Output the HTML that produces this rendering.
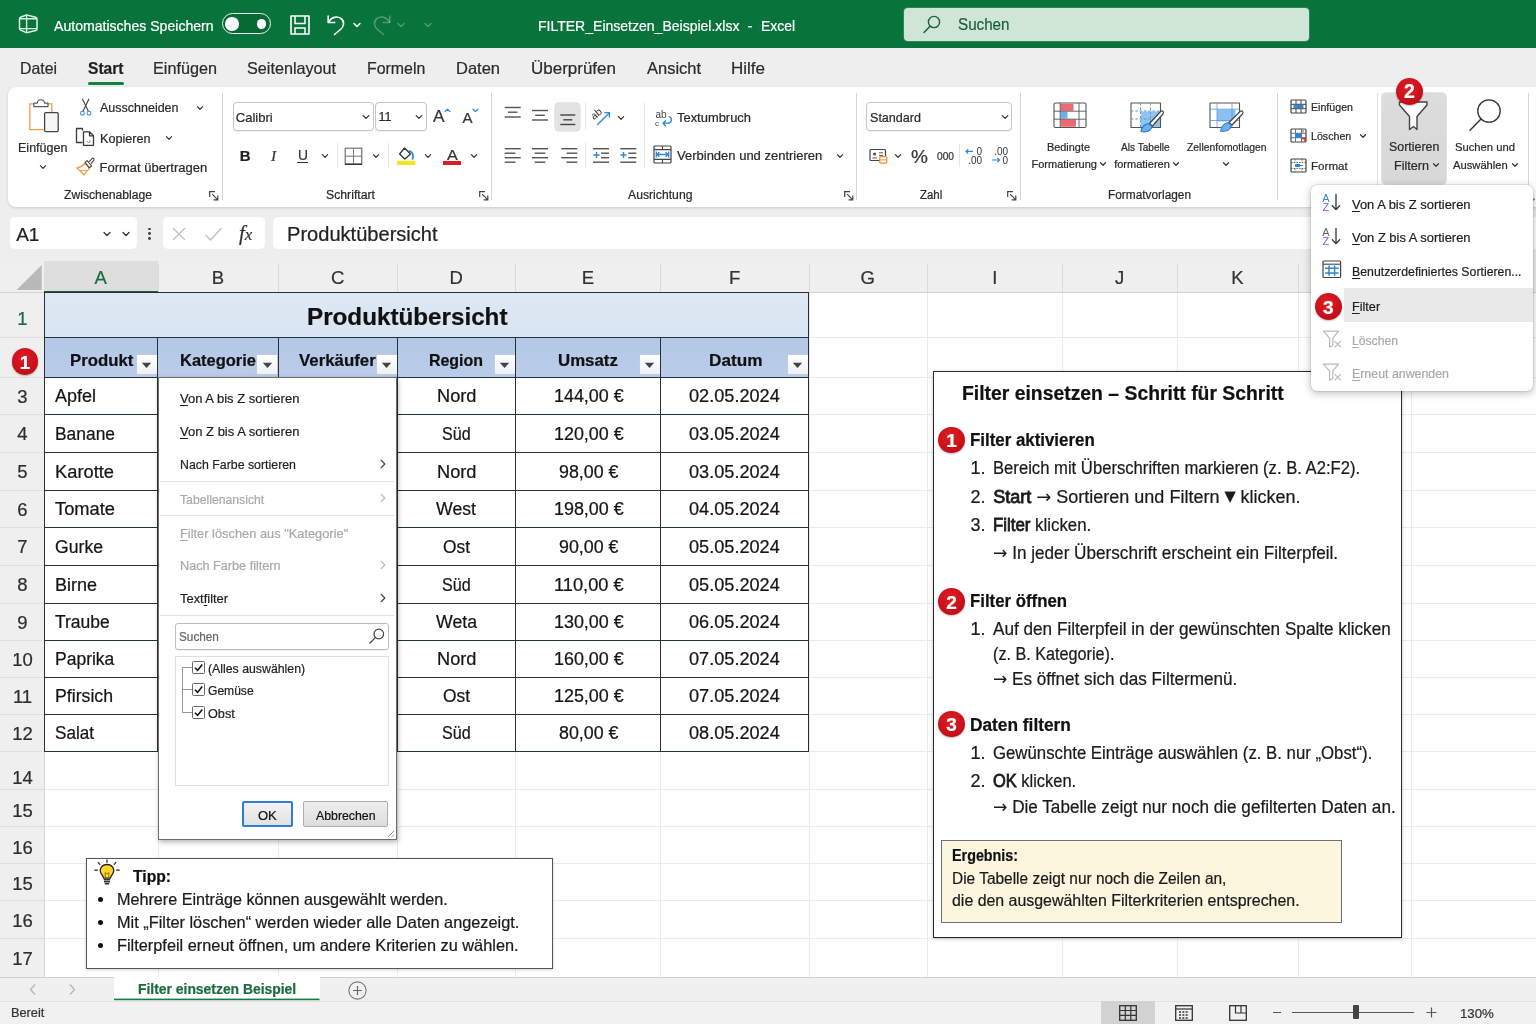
<!DOCTYPE html>
<html lang="de"><head><meta charset="utf-8"><title>FILTER_Einsetzen_Beispiel.xlsx - Excel</title>
<style>
html,body{margin:0;padding:0}
body{width:1536px;height:1024px;position:relative;overflow:hidden;background:#fff;font-family:"Liberation Sans", sans-serif;color:#222;}
.t{position:absolute;white-space:nowrap;line-height:1;transform-origin:0 0;-webkit-text-stroke:.22px}
#root{position:absolute;left:0;top:0;width:1536px;height:1024px;will-change:transform}

</style></head><body><div id="root">
<div style="position:absolute;left:0px;top:0px;width:1536px;height:48px;background:#08733a"></div>
<div style="position:absolute;left:0px;top:48px;width:1536px;height:214px;background:#eeeeee"></div>
<svg style="position:absolute;left:18px;top:13px;" width="21" height="22" viewBox="0 0 21 22"><path d="M1.5 6 Q1.5 4.6 3 4 L7.8 2.2 Q8.8 1.9 9.8 2.2 L17.6 4.2 Q19 4.6 19 6 V16 Q19 17.2 17.8 17.5 L9.6 19.6 Q8.6 19.9 7.6 19.4 L2.6 17 Q1.5 16.5 1.5 15.4 Z" fill="none" stroke="#d9f5e5" stroke-width="1.5" stroke-linejoin="round"/><path d="M1.8 5.8 H18.8 M1.8 15.6 H18.8 M8.6 2.2 V19.6" fill="none" stroke="#d9f5e5" stroke-width="1.4"/></svg>
<div class="t" style="left:53.70px;top:17.80px;font-size:15px;color:#fff;transform:scaleX(0.9383);">Automatisches Speichern</div>
<div style="position:absolute;left:222px;top:13px;width:46.6px;height:18.6px;border:1.7px solid #e8f3ec;border-radius:12px;background:rgba(0,0,0,.07)"></div>
<div style="position:absolute;left:225.3px;top:17.3px;width:13.4px;height:13.4px;border-radius:50%;background:#fff"></div>
<div style="position:absolute;left:256.6px;top:19.3px;width:9.4px;height:9.4px;border-radius:50%;background:#fff"></div>
<svg style="position:absolute;left:289px;top:14px;" width="22" height="22" viewBox="0 0 22 22"><path d="M2 2 H20 V20 H2 Z" fill="none" stroke="#fff" stroke-width="1.6" stroke-linejoin="round"/><path d="M6 2 V9.5 H16 V2 M6 20 V14 H16 V20" fill="none" stroke="#fff" stroke-width="1.5"/></svg>
<svg style="position:absolute;left:326px;top:13px;" width="20" height="23" viewBox="0 0 20 23"><path d="M2.2 3 V9.5 H8.8" fill="none" stroke="#fff" stroke-width="1.6" stroke-linecap="round" stroke-linejoin="round"/><path d="M2.6 9.2 C5 4.2 11 2.6 15 5.5 C19 8.6 18 13.5 14.5 16.5 L8.5 21.5" fill="none" stroke="#fff" stroke-width="1.6" stroke-linecap="round"/></svg>
<svg style="position:absolute;left:352px;top:20.5px;" width="10" height="8" viewBox="0 0 10 8"><path d="M2 2.5 L5 5.5 L8 2.5" fill="none" stroke="#fff" stroke-width="1.5" stroke-linecap="round" stroke-linejoin="round"/></svg>
<svg style="position:absolute;left:372px;top:13px;" width="20" height="23" viewBox="0 0 20 23"><path d="M17.8 3 V9.5 H11.2" fill="none" stroke="rgba(255,255,255,.28)" stroke-width="1.6" stroke-linecap="round" stroke-linejoin="round"/><path d="M17.4 9.2 C15 4.2 9 2.6 5 5.5 C1 8.6 2 13.5 5.5 16.5 L11.5 21.5" fill="none" stroke="rgba(255,255,255,.28)" stroke-width="1.6" stroke-linecap="round"/></svg>
<svg style="position:absolute;left:396px;top:20.5px;" width="10" height="8" viewBox="0 0 10 8"><path d="M2 2.5 L5 5.5 L8 2.5" fill="none" stroke="rgba(255,255,255,.28)" stroke-width="1.5" stroke-linecap="round" stroke-linejoin="round"/></svg>
<svg style="position:absolute;left:422.5px;top:20.5px;" width="10" height="8" viewBox="0 0 10 8"><path d="M2 2.5 L5 5.5 L8 2.5" fill="none" stroke="rgba(255,255,255,.28)" stroke-width="1.5" stroke-linecap="round" stroke-linejoin="round"/></svg>
<div class="t" style="left:538.30px;top:17.80px;font-size:15px;color:#fff;transform:scaleX(0.9344);">FILTER_Einsetzen_Beispiel.xlsx</div>
<div class="t" style="left:747.50px;top:17.80px;font-size:15px;color:#fff;">-</div>
<div class="t" style="left:760.70px;top:17.80px;font-size:15px;color:#fff;transform:scaleX(0.9267);">Excel</div>
<div style="position:absolute;left:903.5px;top:7.5px;width:405.5px;height:33px;background:#cfe6d7;border-radius:4px;box-shadow:0 0 0 1px rgba(255,255,255,.15)"></div>
<svg style="position:absolute;left:922px;top:14px;" width="20" height="20" viewBox="0 0 20 20"><circle cx="12" cy="8" r="5.6" fill="none" stroke="#1d5e3a" stroke-width="1.4"/><path d="M8 12.2 L2 18.4" stroke="#1d5e3a" stroke-width="1.5" stroke-linecap="round"/></svg>
<div class="t" style="left:958.20px;top:16.96px;font-size:16px;color:#1d5e3a;transform:scaleX(0.9490);">Suchen</div>
<div class="t" style="left:19.70px;top:60.33px;font-size:16.5px;color:#2b2b2b;transform:scaleX(0.9603);">Datei</div>
<div class="t" style="left:87.80px;top:60.33px;font-size:16.5px;font-weight:700;color:#1f1f1f;transform:scaleX(0.9443);">Start</div>
<div class="t" style="left:153.00px;top:60.33px;font-size:16.5px;color:#2b2b2b;transform:scaleX(0.9825);">Einfügen</div>
<div class="t" style="left:247.20px;top:60.33px;font-size:16.5px;color:#2b2b2b;transform:scaleX(0.9810);">Seitenlayout</div>
<div class="t" style="left:367.20px;top:60.33px;font-size:16.5px;color:#2b2b2b;transform:scaleX(0.9634);">Formeln</div>
<div class="t" style="left:456.00px;top:60.33px;font-size:16.5px;color:#2b2b2b;">Daten</div>
<div class="t" style="left:531.00px;top:60.33px;font-size:16.5px;color:#2b2b2b;transform:scaleX(1.0295);">Überprüfen</div>
<div class="t" style="left:647.00px;top:60.33px;font-size:16.5px;color:#2b2b2b;">Ansicht</div>
<div class="t" style="left:731.00px;top:60.33px;font-size:16.5px;color:#2b2b2b;transform:scaleX(1.0298);">Hilfe</div>
<div style="position:absolute;left:87.5px;top:81.7px;width:36.2px;height:3.2px;background:#15803f;border-radius:2px"></div>
<div style="position:absolute;left:8px;top:87px;width:1540px;height:119.5px;background:#fff;border-radius:8px 0 0 8px;box-shadow:0 1px 3px rgba(0,0,0,.14)"></div>
<div style="position:absolute;left:222.0px;top:92.5px;width:1px;height:107.5px;background:#d6d6d6"></div>
<div style="position:absolute;left:490.8px;top:92.5px;width:1px;height:107.5px;background:#d6d6d6"></div>
<div style="position:absolute;left:856.2px;top:92.5px;width:1px;height:107.5px;background:#d6d6d6"></div>
<div style="position:absolute;left:1019.8px;top:92.5px;width:1px;height:107.5px;background:#d6d6d6"></div>
<div style="position:absolute;left:1276.9px;top:92.5px;width:1px;height:107.5px;background:#d6d6d6"></div>
<div style="position:absolute;left:1527.5px;top:92.5px;width:1px;height:107.5px;background:#d6d6d6"></div>
<div style="position:absolute;left:1376.9px;top:92.5px;width:1px;height:107.5px;background:#e2e2e2"></div>
<div style="position:absolute;left:337.0px;top:143px;width:1px;height:24.5px;background:#e6e6e6"></div>
<div style="position:absolute;left:387.8px;top:143px;width:1px;height:24.5px;background:#e6e6e6"></div>
<div style="position:absolute;left:585.0px;top:101.7px;width:1px;height:28.299999999999997px;background:#e6e6e6"></div>
<div style="position:absolute;left:585.0px;top:141.7px;width:1px;height:26.600000000000023px;background:#e6e6e6"></div>
<div style="position:absolute;left:644.0px;top:101.7px;width:1px;height:66.60000000000001px;background:#e6e6e6"></div>
<div style="position:absolute;left:959.0px;top:143.5px;width:1px;height:23.5px;background:#e6e6e6"></div>
<svg style="position:absolute;left:28px;top:98px;" width="32" height="36" viewBox="0 0 32 36">
<path d="M6.5 5.8 H1.8 V31.6 H15.5" fill="none" stroke="#f0a13c" stroke-width="1.3"/>
<path d="M19.5 5.8 H23.8 V14" fill="none" stroke="#f0a13c" stroke-width="1.3"/>
<path d="M5.8 8.6 V5.2 H9.2 C9.8 .6 16 .6 16.6 5.2 H20 V8.6 Z" fill="#fff" stroke="#5a5a5a" stroke-width="1.2" stroke-linejoin="round"/>
<rect x="16.6" y="14.6" width="13.6" height="19" rx="1" fill="#f6f6f6" stroke="#444" stroke-width="1.3"/></svg>
<div class="t" style="left:17.50px;top:141.20px;font-size:13px;color:#2a2a2a;transform:scaleX(0.9644);">Einfügen</div>
<svg style="position:absolute;left:38px;top:162.7px;" width="10" height="8" viewBox="0 0 10 8"><path d="M2.4 2.7 L5 5.3 L7.6 2.7" fill="none" stroke="#333" stroke-width="1.2" stroke-linecap="round" stroke-linejoin="round"/></svg>
<svg style="position:absolute;left:78px;top:98px;" width="16" height="20" viewBox="0 0 16 20"><path d="M4.6 1.2 L10.4 13.2 M10.8 1.2 L5 13.2" stroke="#444" stroke-width="1.15" fill="none" stroke-linecap="round"/><circle cx="4.4" cy="15.2" r="1.9" fill="none" stroke="#3b94e0" stroke-width="1.1"/><circle cx="11" cy="15.2" r="1.9" fill="none" stroke="#3b94e0" stroke-width="1.1"/></svg>
<div class="t" style="left:99.50px;top:101.20px;font-size:13px;color:#2a2a2a;transform:scaleX(0.9612);">Ausschneiden</div>
<svg style="position:absolute;left:195px;top:103.5px;" width="10" height="8" viewBox="0 0 10 8"><path d="M2.4 2.7 L5 5.3 L7.6 2.7" fill="none" stroke="#333" stroke-width="1.2" stroke-linecap="round" stroke-linejoin="round"/></svg>
<svg style="position:absolute;left:75px;top:127px;" width="20" height="20" viewBox="0 0 20 20"><path d="M7.5 3.5 V1.5 H1.5 V15.5 H7.5" fill="none" stroke="#3b3b3b" stroke-width="1.3" stroke-linejoin="round"/><path d="M8.5 4.8 H14.5 L18.5 8.8 V18.3 H8.5 Z M14.5 4.8 V8.8 H18.5" fill="#fff" stroke="#3b3b3b" stroke-width="1.3" stroke-linejoin="round"/><path d="M12.3 14.2 a1.4 1.4 0 1 0 2.2 -1.2" fill="none" stroke="#777" stroke-width=".9"/></svg>
<div class="t" style="left:99.50px;top:131.50px;font-size:13px;color:#2a2a2a;transform:scaleX(0.9703);">Kopieren</div>
<svg style="position:absolute;left:163.7px;top:133.5px;" width="10" height="8" viewBox="0 0 10 8"><path d="M2.4 2.7 L5 5.3 L7.6 2.7" fill="none" stroke="#333" stroke-width="1.2" stroke-linecap="round" stroke-linejoin="round"/></svg>
<svg style="position:absolute;left:75px;top:156px;" width="21" height="20" viewBox="0 0 21 20"><path d="M2 12 C5 11.5 8 9.5 10.2 7 L14.4 12.4 C12.5 14 10.5 16.5 9.2 19 Z" fill="#fff" stroke="#f0a13c" stroke-width="1.3" stroke-linejoin="round"/><path d="M5.5 14.5 H12" stroke="#f0a13c" stroke-width="1"/><path d="M10 6.4 L12.2 4.6 L16.6 10 L14.4 11.8 Z" fill="#fff" stroke="#444" stroke-width="1.1" stroke-linejoin="round"/><path d="M14 6 L17 2.6 C18 1.6 19.6 2.8 18.8 4 L16 7.8" fill="#fff" stroke="#444" stroke-width="1.1" stroke-linejoin="round"/></svg>
<div class="t" style="left:99.50px;top:161.20px;font-size:13px;color:#2a2a2a;">Format übertragen</div>
<div class="t" style="left:64.00px;top:188.92px;font-size:12.5px;color:#2a2a2a;transform:scaleX(0.9741);">Zwischenablage</div>
<svg style="position:absolute;left:209.3px;top:190.8px;" width="10" height="10" viewBox="0 0 10 10"><path d="M0.7 6 V0.7 H6" fill="none" stroke="#444" stroke-width="1.2"/><path d="M3.2 3.2 L8.8 8.8 M8.8 4.6 V8.8 H4.6" fill="none" stroke="#444" stroke-width="1.2"/></svg>
<div style="position:absolute;left:232.5px;top:102px;width:139px;height:27px;border:1px solid #c6c6c6;border-radius:4px;background:#fff;box-shadow:0 1px 0 rgba(0,0,0,.06)"></div>
<div class="t" style="left:235.80px;top:110.80px;font-size:13px;color:#2a2a2a;">Calibri</div>
<svg style="position:absolute;left:360.8px;top:112.7px;" width="10" height="8" viewBox="0 0 10 8"><path d="M2.2 2.6 L5 5.4 L7.8 2.6" fill="none" stroke="#333" stroke-width="1.3" stroke-linecap="round" stroke-linejoin="round"/></svg>
<div style="position:absolute;left:375px;top:102px;width:49.5px;height:27px;border:1px solid #c6c6c6;border-radius:4px;background:#fff;box-shadow:0 1px 0 rgba(0,0,0,.06)"></div>
<div class="t" style="left:378.50px;top:111.22px;font-size:12.5px;color:#2a2a2a;">11</div>
<svg style="position:absolute;left:414px;top:112.7px;" width="10" height="8" viewBox="0 0 10 8"><path d="M2.2 2.6 L5 5.4 L7.8 2.6" fill="none" stroke="#333" stroke-width="1.3" stroke-linecap="round" stroke-linejoin="round"/></svg>
<div class="t" style="left:433.00px;top:107.91px;font-size:17px;color:#333;transform:scaleX(1.0138);">A</div>
<svg style="position:absolute;left:443.5px;top:107.5px;" width="7" height="5" viewBox="0 0 7 5"><path d="M1 3.6 L3.5 1.2 L6 3.6" fill="none" stroke="#2b88d8" stroke-width="1.2" stroke-linecap="round" stroke-linejoin="round"/></svg>
<div class="t" style="left:462.50px;top:109.60px;font-size:15px;color:#333;">A</div>
<svg style="position:absolute;left:472px;top:107.5px;" width="7" height="5" viewBox="0 0 7 5"><path d="M1 1.2 L3.5 3.6 L6 1.2" fill="none" stroke="#2b88d8" stroke-width="1.2" stroke-linecap="round" stroke-linejoin="round"/></svg>
<div class="t" style="left:239.70px;top:148.00px;font-size:15px;font-weight:700;">B</div>
<div class="t" style="left:271.00px;top:147.58px;font-size:15.5px;color:#333;font-style:italic;font-family:'Liberation Serif',serif;">I</div>
<div class="t" style="left:297.50px;top:147.83px;font-size:14.5px;color:#333;transform:scaleX(0.9538);">U</div>
<div style="position:absolute;left:297.3px;top:162px;width:10.4px;height:1.2px;background:#333"></div>
<svg style="position:absolute;left:319.7px;top:152px;" width="10" height="8" viewBox="0 0 10 8"><path d="M2.4 2.7 L5 5.3 L7.6 2.7" fill="none" stroke="#333" stroke-width="1.2" stroke-linecap="round" stroke-linejoin="round"/></svg>
<svg style="position:absolute;left:344px;top:146.5px;" width="19" height="18.5" viewBox="0 0 19 18.5"><rect x="1.2" y="1.2" width="16.6" height="16" fill="none" stroke="#666" stroke-width="1.1"/><path d="M9.5 1.2 V17.2 M1.2 9.2 H17.8" stroke="#777" stroke-width="1"/><path d="M1 17.3 H18" stroke="#333" stroke-width="1.5"/></svg>
<svg style="position:absolute;left:371.3px;top:152px;" width="10" height="8" viewBox="0 0 10 8"><path d="M2.4 2.7 L5 5.3 L7.6 2.7" fill="none" stroke="#333" stroke-width="1.2" stroke-linecap="round" stroke-linejoin="round"/></svg>
<svg style="position:absolute;left:396px;top:146px;" width="21" height="20" viewBox="0 0 21 20"><path d="M8.5 2 L14.5 8 L8.8 13 L3.6 8 Z" fill="#fff" stroke="#333" stroke-width="1.3" stroke-linejoin="round"/><path d="M13.5 5 C16.5 6 17.6 9 16.6 12.8" fill="none" stroke="#2b88d8" stroke-width="1.8" stroke-linecap="round"/><rect x="1" y="14.7" width="18.4" height="4.3" fill="#f3e527"/></svg>
<svg style="position:absolute;left:422.8px;top:152px;" width="10" height="8" viewBox="0 0 10 8"><path d="M2.4 2.7 L5 5.3 L7.6 2.7" fill="none" stroke="#333" stroke-width="1.2" stroke-linecap="round" stroke-linejoin="round"/></svg>
<div class="t" style="left:446.70px;top:147.18px;font-size:15.5px;color:#333;transform:scaleX(1.0441);">A</div>
<div style="position:absolute;left:443px;top:160.8px;width:18px;height:4.2px;background:#e01b24"></div>
<svg style="position:absolute;left:469px;top:152px;" width="10" height="8" viewBox="0 0 10 8"><path d="M2.4 2.7 L5 5.3 L7.6 2.7" fill="none" stroke="#333" stroke-width="1.2" stroke-linecap="round" stroke-linejoin="round"/></svg>
<div class="t" style="left:326.00px;top:188.92px;font-size:12.5px;color:#2a2a2a;transform:scaleX(0.9797);">Schriftart</div>
<svg style="position:absolute;left:478.5px;top:190.8px;" width="10" height="10" viewBox="0 0 10 10"><path d="M0.7 6 V0.7 H6" fill="none" stroke="#444" stroke-width="1.2"/><path d="M3.2 3.2 L8.8 8.8 M8.8 4.6 V8.8 H4.6" fill="none" stroke="#444" stroke-width="1.2"/></svg>
<div style="position:absolute;left:554.5px;top:103px;width:25.8px;height:28.2px;background:#e3e3e3;border-radius:4px;box-shadow:0 0 0 .5px #d2d2d2"></div>
<svg style="position:absolute;left:591.5px;top:108px;" width="20" height="18" viewBox="0 0 20 18"><text x="0.5" y="9.5" font-family="Liberation Sans, sans-serif" font-size="10.5" fill="#333" transform="rotate(-38 5 9)">ab</text><path d="M5.5 16.5 L17 5.2 M12.8 4.6 L17.4 4.6 L17.4 9.2" fill="none" stroke="#2b88d8" stroke-width="1.3" stroke-linecap="round" stroke-linejoin="round"/></svg>
<svg style="position:absolute;left:616px;top:113.5px;" width="10" height="8" viewBox="0 0 10 8"><path d="M2.4 2.7 L5 5.3 L7.6 2.7" fill="none" stroke="#333" stroke-width="1.2" stroke-linecap="round" stroke-linejoin="round"/></svg>
<svg style="position:absolute;left:655px;top:108.5px;" width="18" height="18" viewBox="0 0 18 18"><text x="0.5" y="9" font-family="Liberation Sans, sans-serif" font-size="10" fill="#444">ab</text><text x="0" y="16.5" font-family="Liberation Sans, sans-serif" font-size="8" fill="#444">c</text><path d="M14.2 7.5 C17.5 9 17 14.2 13 14.2 H8.2 M10.6 11.7 L8 14.2 L10.6 16.7" fill="none" stroke="#2b88d8" stroke-width="1.3" stroke-linecap="round" stroke-linejoin="round"/></svg>
<div class="t" style="left:677.00px;top:110.80px;font-size:13px;color:#2a2a2a;transform:scaleX(0.9943);">Textumbruch</div>
<svg style="position:absolute;left:592.5px;top:151px;" width="8" height="8" viewBox="0 0 8 8"><path d="M0.5 4 H6.5 M3.5 1 V7" stroke="#2b88d8" stroke-width="1.4" fill="none"/></svg>
<svg style="position:absolute;left:619.8px;top:151px;" width="8" height="8" viewBox="0 0 8 8"><path d="M0.5 4 H6.5 M3.5 1 V7" stroke="#2b88d8" stroke-width="1.4" fill="none"/></svg>
<svg style="position:absolute;left:0px;top:0px;" width="1536" height="210" viewBox="0 0 1536 210"><rect x="504.70" y="106.80" width="16.00" height="1.4" fill="#555"/><rect x="507.90" y="111.50" width="9.60" height="1.4" fill="#555"/><rect x="504.70" y="116.30" width="16.00" height="1.4" fill="#555"/><rect x="532.00" y="109.80" width="16.00" height="1.4" fill="#555"/><rect x="535.20" y="114.60" width="9.60" height="1.4" fill="#555"/><rect x="532.00" y="119.30" width="16.00" height="1.4" fill="#555"/><rect x="560.30" y="114.30" width="15.00" height="1.4" fill="#444"/><rect x="563.30" y="119.10" width="9.00" height="1.4" fill="#444"/><rect x="560.30" y="123.80" width="15.00" height="1.4" fill="#444"/><rect x="504.70" y="148.00" width="16.00" height="1.4" fill="#555"/><rect x="504.70" y="152.50" width="10.72" height="1.4" fill="#555"/><rect x="504.70" y="157.00" width="16.00" height="1.4" fill="#555"/><rect x="504.70" y="161.50" width="10.72" height="1.4" fill="#555"/><rect x="532.00" y="148.00" width="16.00" height="1.4" fill="#555"/><rect x="534.64" y="152.50" width="10.72" height="1.4" fill="#555"/><rect x="532.00" y="157.00" width="16.00" height="1.4" fill="#555"/><rect x="534.64" y="161.50" width="10.72" height="1.4" fill="#555"/><rect x="561.30" y="148.00" width="16.00" height="1.4" fill="#555"/><rect x="566.58" y="152.50" width="10.72" height="1.4" fill="#555"/><rect x="561.30" y="157.00" width="16.00" height="1.4" fill="#555"/><rect x="566.58" y="161.50" width="10.72" height="1.4" fill="#555"/><rect x="593.00" y="148.00" width="16.00" height="1.4" fill="#555"/><rect x="593.00" y="161.50" width="16.00" height="1.4" fill="#555"/><rect x="601.00" y="152.50" width="8.00" height="1.4" fill="#555"/><rect x="601.00" y="157.00" width="8.00" height="1.4" fill="#555"/><rect x="620.30" y="148.00" width="16.00" height="1.4" fill="#555"/><rect x="620.30" y="161.50" width="16.00" height="1.4" fill="#555"/><rect x="628.30" y="152.50" width="8.00" height="1.4" fill="#555"/><rect x="628.30" y="157.00" width="8.00" height="1.4" fill="#555"/></svg>
<svg style="position:absolute;left:653px;top:145px;" width="19" height="19" viewBox="0 0 19 19"><rect x="1" y="1" width="17" height="17" rx="1" fill="none" stroke="#444" stroke-width="1.2"/><path d="M1 4.6 H18 M1 14.4 H18 M9.5 1 V4.6 M9.5 14.4 V18" stroke="#444" stroke-width="1.1"/><path d="M4 9.5 H15 M6.3 7.2 L4 9.5 L6.3 11.8 M12.7 7.2 L15 9.5 L12.7 11.8 M3.3 6.6 V12.4 M15.7 6.6 V12.4" fill="none" stroke="#2b88d8" stroke-width="1.3"/></svg>
<div class="t" style="left:677.00px;top:148.50px;font-size:13px;color:#2a2a2a;">Verbinden und zentrieren</div>
<svg style="position:absolute;left:835px;top:152px;" width="10" height="8" viewBox="0 0 10 8"><path d="M2.4 2.7 L5 5.3 L7.6 2.7" fill="none" stroke="#333" stroke-width="1.2" stroke-linecap="round" stroke-linejoin="round"/></svg>
<div class="t" style="left:627.50px;top:188.92px;font-size:12.5px;color:#2a2a2a;transform:scaleX(0.9770);">Ausrichtung</div>
<svg style="position:absolute;left:843.6px;top:190.8px;" width="10" height="10" viewBox="0 0 10 10"><path d="M0.7 6 V0.7 H6" fill="none" stroke="#444" stroke-width="1.2"/><path d="M3.2 3.2 L8.8 8.8 M8.8 4.6 V8.8 H4.6" fill="none" stroke="#444" stroke-width="1.2"/></svg>
<div style="position:absolute;left:866px;top:102px;width:144.3px;height:27px;border:1px solid #c6c6c6;border-radius:4px;background:#fff;box-shadow:0 1px 0 rgba(0,0,0,.06)"></div>
<div class="t" style="left:869.70px;top:110.80px;font-size:13px;color:#2a2a2a;transform:scaleX(0.9665);">Standard</div>
<svg style="position:absolute;left:999.7px;top:112.7px;" width="10" height="8" viewBox="0 0 10 8"><path d="M2.2 2.6 L5 5.4 L7.8 2.6" fill="none" stroke="#333" stroke-width="1.3" stroke-linecap="round" stroke-linejoin="round"/></svg>
<svg style="position:absolute;left:868.5px;top:148px;" width="19" height="16" viewBox="0 0 19 16"><rect x="1" y="1.5" width="15.5" height="11" rx="1" fill="#fff" stroke="#444" stroke-width="1.2"/><path d="M3.5 10 H8 M10 4.8 H14 M10 7.4 H14" stroke="#555" stroke-width="1"/><circle cx="5.6" cy="6" r="1.6" fill="#555"/><rect x="10.8" y="8.6" width="7" height="6.6" rx="1" fill="#fff" stroke="#e8912d" stroke-width="1.2"/><path d="M10.8 11.9 H17.8" stroke="#e8912d" stroke-width="1"/></svg>
<svg style="position:absolute;left:893px;top:152px;" width="10" height="8" viewBox="0 0 10 8"><path d="M2.4 2.7 L5 5.3 L7.6 2.7" fill="none" stroke="#333" stroke-width="1.2" stroke-linecap="round" stroke-linejoin="round"/></svg>
<div class="t" style="left:911.00px;top:147.42px;font-size:19px;color:#333;">%</div>
<div class="t" style="left:936.80px;top:151.11px;font-size:10.5px;color:#333;transform:scaleX(0.9697);">000</div>
<svg style="position:absolute;left:965px;top:147px;" width="19" height="17.5" viewBox="0 0 19 17.5"><text x="11.5" y="8" font-family="Liberation Sans, sans-serif" font-size="10" fill="#333">0</text><text x="3.2" y="16.8" font-family="Liberation Sans, sans-serif" font-size="10" fill="#333">.00</text><path d="M1 4.4 H8 M3.2 2.2 L1 4.4 L3.2 6.6" fill="none" stroke="#2b88d8" stroke-width="1.2"/></svg>
<svg style="position:absolute;left:990.5px;top:147px;" width="19" height="17.5" viewBox="0 0 19 17.5"><text x="3.2" y="8" font-family="Liberation Sans, sans-serif" font-size="10" fill="#333">.00</text><text x="11.5" y="16.8" font-family="Liberation Sans, sans-serif" font-size="10" fill="#333">0</text><path d="M1 13 H8.6 M6.4 10.8 L8.6 13 L6.4 15.2" fill="none" stroke="#2b88d8" stroke-width="1.2"/></svg>
<div class="t" style="left:920.00px;top:188.92px;font-size:12.5px;color:#2a2a2a;transform:scaleX(0.9125);">Zahl</div>
<svg style="position:absolute;left:1007px;top:190.8px;" width="10" height="10" viewBox="0 0 10 10"><path d="M0.7 6 V0.7 H6" fill="none" stroke="#444" stroke-width="1.2"/><path d="M3.2 3.2 L8.8 8.8 M8.8 4.6 V8.8 H4.6" fill="none" stroke="#444" stroke-width="1.2"/></svg>
<svg style="position:absolute;left:1053px;top:102px;" width="34" height="27" viewBox="0 0 34 27"><rect x="1" y="1" width="32" height="24.5" rx="1.5" fill="#fff" stroke="#555" stroke-width="1.1"/><rect x="7.5" y="1.8" width="13" height="7" fill="#ee6a72"/><rect x="7.5" y="9.6" width="7" height="7" fill="#6fb0ea"/><rect x="7.5" y="17.4" width="15.5" height="7.4" fill="#ee6a72"/><path d="M7.2 1 V25.5 M26 1 V25.5 M1 9.2 H33 M1 17.2 H33" stroke="#555" stroke-width=".9" fill="none"/></svg>
<div class="t" style="left:1047.00px;top:141.69px;font-size:11px;color:#2a2a2a;transform:scaleX(0.9899);">Bedingte</div>
<div class="t" style="left:1031.50px;top:158.99px;font-size:11px;color:#2a2a2a;">Formatierung</div>
<svg style="position:absolute;left:1097.8px;top:159.5px;" width="10" height="8" viewBox="0 0 10 8"><path d="M2.5 2.75 L5 5.25 L7.5 2.75" fill="none" stroke="#333" stroke-width="1.2" stroke-linecap="round" stroke-linejoin="round"/></svg>
<svg style="position:absolute;left:1129.5px;top:102px;" width="35" height="32" viewBox="0 0 35 32"><path d="M1 1 H30.5 V25.5 H1 Z" fill="#fff" stroke="#555" stroke-width="1.1" stroke-linejoin="round"/><rect x="11" y="9.5" width="19" height="15.5" fill="#6fb0ea" opacity=".75"/><path d="M10.5 1 V25 M20.5 1 V25 M1 9 H30 M1 17 H30" stroke="#5b9bd5" stroke-width="1" stroke-dasharray="2.5 1.8" fill="none"/><path d="M30.5 9.5 C32.5 8 34.5 10 33 12 L22.5 24 L19.5 21.5 Z" fill="#fff" stroke="#444" stroke-width="1.2" stroke-linejoin="round"/><path d="M11 29.5 C12 24 16 21 19.6 22.2 L22 24.6 C21 28.5 17 30.5 11 29.5 Z" fill="#6fb0ea" stroke="#2b7cd3" stroke-width="1.2" stroke-linejoin="round"/></svg>
<div class="t" style="left:1120.50px;top:141.69px;font-size:11px;color:#2a2a2a;transform:scaleX(0.9189);">Als Tabelle</div>
<div class="t" style="left:1114.20px;top:158.99px;font-size:11px;color:#2a2a2a;">formatieren</div>
<svg style="position:absolute;left:1170.8px;top:159.5px;" width="10" height="8" viewBox="0 0 10 8"><path d="M2.5 2.75 L5 5.25 L7.5 2.75" fill="none" stroke="#333" stroke-width="1.2" stroke-linecap="round" stroke-linejoin="round"/></svg>
<svg style="position:absolute;left:1209px;top:102px;" width="36" height="32" viewBox="0 0 36 32"><path d="M1 1 H30.5 V25.5 H1 Z" fill="#fff" stroke="#555" stroke-width="1.1" stroke-linejoin="round"/><rect x="8" y="7.5" width="18.5" height="12" fill="#6fb0ea" opacity=".8"/><path d="M8 1 V25 M23 1 V25 M1 7.2 H30 M1 18.5 H30" stroke="#5b9bd5" stroke-width="1" fill="none" opacity=".8"/><path d="M31 9.5 C33 8 35 10 33.5 12 L23 23 L20 20.5 Z" fill="#fff" stroke="#444" stroke-width="1.2" stroke-linejoin="round"/><path d="M11.5 29 C12.5 23.5 16.5 20 20.2 21.2 L22.4 23.6 C21.4 27.5 17.4 30 11.5 29 Z" fill="#6fb0ea" stroke="#2b7cd3" stroke-width="1.2" stroke-linejoin="round"/></svg>
<div class="t" style="left:1186.70px;top:141.69px;font-size:11px;color:#2a2a2a;transform:scaleX(0.9432);">Zellenfomotlagen</div>
<svg style="position:absolute;left:1221.2px;top:159.5px;" width="10" height="8" viewBox="0 0 10 8"><path d="M2.5 2.75 L5 5.25 L7.5 2.75" fill="none" stroke="#333" stroke-width="1.2" stroke-linecap="round" stroke-linejoin="round"/></svg>
<div class="t" style="left:1107.80px;top:188.92px;font-size:12.5px;color:#2a2a2a;transform:scaleX(0.9481);">Formatvorlagen</div>
<svg style="position:absolute;left:1289.5px;top:98.7px;" width="17" height="15" viewBox="0 0 17 15"><rect x="1" y="1" width="15" height="13" rx="1" fill="#fff" stroke="#444" stroke-width="1.2"/><path d="M1 5.3 H16 M1 9.7 H16 M6 1 V5.3 M11 1 V5.3 M8.5 5.3 V9.7 M6 9.7 V14 M11 9.7 V14" stroke="#444" stroke-width="1" fill="none"/><rect x="3.5" y="5.8" width="10" height="3.4" fill="#2b88d8"/></svg>
<svg style="position:absolute;left:1289.5px;top:128px;" width="17" height="15" viewBox="0 0 17 15"><rect x="1" y="1" width="15" height="13" rx="1" fill="#fff" stroke="#444" stroke-width="1.2"/><path d="M1 5.3 H16 M1 9.7 H16 M5.5 1 V14 M11.5 1 V14" stroke="#666" stroke-width=".9" fill="none"/><rect x="5" y="5" width="6" height="5" fill="#2b88d8"/><path d="M12 10.5 H15 V13.5" stroke="#e0262d" stroke-width="1.6" fill="none"/><path d="M13 2 V4.5" stroke="#e0262d" stroke-width="1"/></svg>
<svg style="position:absolute;left:1289.5px;top:158px;" width="17" height="15" viewBox="0 0 17 15"><rect x="1" y="1" width="15" height="13" rx="1" fill="#fff" stroke="#444" stroke-width="1.2"/><path d="M1 4.5 H16 M1 10.5 H16 M5 1 V4.5 M12 1 V4.5 M5 10.5 V14 M12 10.5 V14" stroke="#555" stroke-width=".9" stroke-dasharray="1.5 1.2" fill="none"/><rect x="5" y="6" width="5" height="3" fill="#2b88d8"/><path d="M10 7.5 H13" stroke="#2b88d8" stroke-width="1"/></svg>
<div class="t" style="left:1310.70px;top:101.77px;font-size:11.5px;color:#2a2a2a;transform:scaleX(0.9250);">Einfügen</div>
<div class="t" style="left:1310.70px;top:130.77px;font-size:11.5px;color:#2a2a2a;transform:scaleX(0.9268);">Löschen</div>
<svg style="position:absolute;left:1358px;top:132px;" width="10" height="8" viewBox="0 0 10 8"><path d="M2.5 2.75 L5 5.25 L7.5 2.75" fill="none" stroke="#333" stroke-width="1.2" stroke-linecap="round" stroke-linejoin="round"/></svg>
<div class="t" style="left:1310.70px;top:160.77px;font-size:11.5px;color:#2a2a2a;transform:scaleX(1.0076);">Format</div>
<div style="position:absolute;left:1382.2px;top:93.4px;width:64px;height:91px;background:linear-gradient(#dcdcdc,#d8d8d8);border-radius:4px;box-shadow:0 0 0 .6px #cfcfcf"></div>
<svg style="position:absolute;left:1397px;top:99px;" width="33" height="34" viewBox="0 0 33 34"><path d="M2.5 3 H30 V6 L20 17.5 V30.5 L16.5 27.5 L12.5 30.5 V17.5 L2.5 6 Z" fill="#fff" stroke="#444" stroke-width="1.4" stroke-linejoin="round"/></svg>
<div class="t" style="left:1388.60px;top:141.24px;font-size:12px;color:#2a2a2a;transform:scaleX(1.0328);">Sortieren</div>
<div class="t" style="left:1393.50px;top:159.94px;font-size:12px;color:#2a2a2a;transform:scaleX(1.0497);">Filtern</div>
<svg style="position:absolute;left:1431px;top:160.6px;" width="10" height="8" viewBox="0 0 10 8"><path d="M2.5 2.75 L5 5.25 L7.5 2.75" fill="none" stroke="#333" stroke-width="1.2" stroke-linecap="round" stroke-linejoin="round"/></svg>
<svg style="position:absolute;left:1467px;top:97px;" width="36" height="36" viewBox="0 0 36 36"><circle cx="22" cy="14" r="11.2" fill="none" stroke="#333" stroke-width="1.3"/><path d="M14 22 L3 33.3" stroke="#333" stroke-width="1.4" stroke-linecap="round"/></svg>
<div class="t" style="left:1455.00px;top:141.67px;font-size:11.5px;color:#2a2a2a;transform:scaleX(0.9773);">Suchen und</div>
<div class="t" style="left:1453.20px;top:160.37px;font-size:11.5px;color:#2a2a2a;transform:scaleX(0.9740);">Auswählen</div>
<svg style="position:absolute;left:1509.7px;top:160.6px;" width="10" height="8" viewBox="0 0 10 8"><path d="M2.5 2.75 L5 5.25 L7.5 2.75" fill="none" stroke="#333" stroke-width="1.2" stroke-linecap="round" stroke-linejoin="round"/></svg>
<svg style="position:absolute;left:1526.5px;top:195.5px;" width="10" height="8" viewBox="0 0 10 8"><path d="M2.6 2.8 L5 5.2 L7.4 2.8" fill="none" stroke="#555" stroke-width="1.1" stroke-linecap="round" stroke-linejoin="round"/></svg>
<div style="position:absolute;left:10px;top:216.7px;width:126.7px;height:32.6px;background:#fff;border-radius:5px"></div>
<div class="t" style="left:16.20px;top:225.12px;font-size:19px;">A1</div>
<svg style="position:absolute;left:101.7px;top:230px;" width="10" height="8" viewBox="0 0 10 8"><path d="M2 2.5 L5 5.5 L8 2.5" fill="none" stroke="#333" stroke-width="1.3" stroke-linecap="round" stroke-linejoin="round"/></svg>
<svg style="position:absolute;left:120.7px;top:230px;" width="10" height="8" viewBox="0 0 10 8"><path d="M2 2.5 L5 5.5 L8 2.5" fill="none" stroke="#333" stroke-width="1.3" stroke-linecap="round" stroke-linejoin="round"/></svg>
<div style="position:absolute;left:148.3px;top:227.6px;width:2.8px;height:2.8px;border-radius:50%;background:#444"></div>
<div style="position:absolute;left:148.3px;top:232.4px;width:2.8px;height:2.8px;border-radius:50%;background:#444"></div>
<div style="position:absolute;left:148.3px;top:237.2px;width:2.8px;height:2.8px;border-radius:50%;background:#444"></div>
<div style="position:absolute;left:163.3px;top:216.7px;width:101.7px;height:32.6px;background:#fff;border-radius:5px"></div>
<svg style="position:absolute;left:171px;top:226px;" width="16" height="16" viewBox="0 0 16 16"><path d="M2 2 L14 14 M14 2 L2 14" stroke="#c2c2c2" stroke-width="1.4" fill="none"/></svg>
<svg style="position:absolute;left:204px;top:226px;" width="19" height="16" viewBox="0 0 19 16"><path d="M1.5 9 L6.5 14 L17.5 2" stroke="#c2c2c2" stroke-width="1.4" fill="none"/></svg>
<div class="t" style="left:239.00px;top:223.22px;font-size:21px;color:#333;font-family:'Liberation Serif',serif;"><i>f</i><span style="font-size:17px"><i>x</i></span></div>
<div style="position:absolute;left:272.7px;top:216.7px;width:1270px;height:32.6px;background:#fff;border-radius:5px 0 0 5px"></div>
<div class="t" style="left:286.70px;top:224.69px;font-size:19.5px;transform:scaleX(1.0292);">Produktübersicht</div>
<div style="position:absolute;left:0px;top:261px;width:1536px;height:716px;background:#fff"></div>
<div style="position:absolute;left:0px;top:261px;width:1536px;height:31px;background:#efefef"></div>
<div style="position:absolute;left:0px;top:261px;width:44px;height:716px;background:#efefef"></div>
<div style="position:absolute;left:158px;top:292px;width:1px;height:685px;background:#ebebeb"></div>
<div style="position:absolute;left:278px;top:292px;width:1px;height:685px;background:#ebebeb"></div>
<div style="position:absolute;left:397px;top:292px;width:1px;height:685px;background:#ebebeb"></div>
<div style="position:absolute;left:515px;top:292px;width:1px;height:685px;background:#ebebeb"></div>
<div style="position:absolute;left:660px;top:292px;width:1px;height:685px;background:#ebebeb"></div>
<div style="position:absolute;left:809px;top:292px;width:1px;height:685px;background:#ebebeb"></div>
<div style="position:absolute;left:927px;top:292px;width:1px;height:685px;background:#ebebeb"></div>
<div style="position:absolute;left:1062px;top:292px;width:1px;height:685px;background:#ebebeb"></div>
<div style="position:absolute;left:1177px;top:292px;width:1px;height:685px;background:#ebebeb"></div>
<div style="position:absolute;left:1298px;top:292px;width:1px;height:685px;background:#ebebeb"></div>
<div style="position:absolute;left:1411px;top:292px;width:1px;height:685px;background:#ebebeb"></div>
<div style="position:absolute;left:44px;top:337px;width:1492px;height:1px;background:#ebebeb"></div>
<div style="position:absolute;left:44px;top:377px;width:1492px;height:1px;background:#ebebeb"></div>
<div style="position:absolute;left:44px;top:414px;width:1492px;height:1px;background:#ebebeb"></div>
<div style="position:absolute;left:44px;top:452px;width:1492px;height:1px;background:#ebebeb"></div>
<div style="position:absolute;left:44px;top:490px;width:1492px;height:1px;background:#ebebeb"></div>
<div style="position:absolute;left:44px;top:527px;width:1492px;height:1px;background:#ebebeb"></div>
<div style="position:absolute;left:44px;top:565px;width:1492px;height:1px;background:#ebebeb"></div>
<div style="position:absolute;left:44px;top:603px;width:1492px;height:1px;background:#ebebeb"></div>
<div style="position:absolute;left:44px;top:640px;width:1492px;height:1px;background:#ebebeb"></div>
<div style="position:absolute;left:44px;top:677px;width:1492px;height:1px;background:#ebebeb"></div>
<div style="position:absolute;left:44px;top:714px;width:1492px;height:1px;background:#ebebeb"></div>
<div style="position:absolute;left:44px;top:751px;width:1492px;height:1px;background:#ebebeb"></div>
<div style="position:absolute;left:44px;top:789px;width:1492px;height:1px;background:#ebebeb"></div>
<div style="position:absolute;left:44px;top:826px;width:1492px;height:1px;background:#ebebeb"></div>
<div style="position:absolute;left:44px;top:863px;width:1492px;height:1px;background:#ebebeb"></div>
<div style="position:absolute;left:44px;top:900px;width:1492px;height:1px;background:#ebebeb"></div>
<div style="position:absolute;left:44px;top:938px;width:1492px;height:1px;background:#ebebeb"></div>
<div style="position:absolute;left:158px;top:264px;width:1px;height:28px;background:#dadada"></div>
<div style="position:absolute;left:278px;top:264px;width:1px;height:28px;background:#dadada"></div>
<div style="position:absolute;left:397px;top:264px;width:1px;height:28px;background:#dadada"></div>
<div style="position:absolute;left:515px;top:264px;width:1px;height:28px;background:#dadada"></div>
<div style="position:absolute;left:660px;top:264px;width:1px;height:28px;background:#dadada"></div>
<div style="position:absolute;left:809px;top:264px;width:1px;height:28px;background:#dadada"></div>
<div style="position:absolute;left:927px;top:264px;width:1px;height:28px;background:#dadada"></div>
<div style="position:absolute;left:1062px;top:264px;width:1px;height:28px;background:#dadada"></div>
<div style="position:absolute;left:1177px;top:264px;width:1px;height:28px;background:#dadada"></div>
<div style="position:absolute;left:1298px;top:264px;width:1px;height:28px;background:#dadada"></div>
<div style="position:absolute;left:1411px;top:264px;width:1px;height:28px;background:#dadada"></div>
<div style="position:absolute;left:0px;top:337px;width:44px;height:1px;background:#dedede"></div>
<div style="position:absolute;left:0px;top:377px;width:44px;height:1px;background:#dedede"></div>
<div style="position:absolute;left:0px;top:414px;width:44px;height:1px;background:#dedede"></div>
<div style="position:absolute;left:0px;top:452px;width:44px;height:1px;background:#dedede"></div>
<div style="position:absolute;left:0px;top:490px;width:44px;height:1px;background:#dedede"></div>
<div style="position:absolute;left:0px;top:527px;width:44px;height:1px;background:#dedede"></div>
<div style="position:absolute;left:0px;top:565px;width:44px;height:1px;background:#dedede"></div>
<div style="position:absolute;left:0px;top:603px;width:44px;height:1px;background:#dedede"></div>
<div style="position:absolute;left:0px;top:640px;width:44px;height:1px;background:#dedede"></div>
<div style="position:absolute;left:0px;top:677px;width:44px;height:1px;background:#dedede"></div>
<div style="position:absolute;left:0px;top:714px;width:44px;height:1px;background:#dedede"></div>
<div style="position:absolute;left:0px;top:751px;width:44px;height:1px;background:#dedede"></div>
<div style="position:absolute;left:0px;top:789px;width:44px;height:1px;background:#dedede"></div>
<div style="position:absolute;left:0px;top:826px;width:44px;height:1px;background:#dedede"></div>
<div style="position:absolute;left:0px;top:863px;width:44px;height:1px;background:#dedede"></div>
<div style="position:absolute;left:0px;top:900px;width:44px;height:1px;background:#dedede"></div>
<div style="position:absolute;left:0px;top:938px;width:44px;height:1px;background:#dedede"></div>
<div style="position:absolute;left:0px;top:292px;width:1536px;height:1px;background:#d2d2d2"></div>
<div style="position:absolute;left:44px;top:292px;width:1px;height:685px;background:#d6d6d6"></div>
<div style="position:absolute;left:44px;top:261px;width:113.5px;height:31px;background:#dedede"></div>
<div style="position:absolute;left:44px;top:290.5px;width:113.5px;height:2px;background:#1a5c38"></div>
<svg style="position:absolute;left:14px;top:263px;" width="30" height="29" viewBox="0 0 30 29"><path d="M27.7 2 V27 H2.5 Z" fill="#b9b9b9"/></svg>
<div class="t" style="left:94.58px;top:269.34px;font-size:18.5px;color:#1e6b41;">A</div>
<div class="t" style="left:211.83px;top:269.34px;font-size:18.5px;color:#333;">B</div>
<div class="t" style="left:331.06px;top:269.34px;font-size:18.5px;color:#333;">C</div>
<div class="t" style="left:449.46px;top:269.34px;font-size:18.5px;color:#333;">D</div>
<div class="t" style="left:581.73px;top:269.34px;font-size:18.5px;color:#333;">E</div>
<div class="t" style="left:728.89px;top:269.34px;font-size:18.5px;color:#333;">F</div>
<div class="t" style="left:860.60px;top:269.34px;font-size:18.5px;color:#333;">G</div>
<div class="t" style="left:992.18px;top:269.34px;font-size:18.5px;color:#333;">I</div>
<div class="t" style="left:1115.12px;top:269.34px;font-size:18.5px;color:#333;">J</div>
<div class="t" style="left:1231.18px;top:269.34px;font-size:18.5px;color:#333;">K</div>
<div class="t" style="left:17.35px;top:309.84px;font-size:18.5px;color:#1e6b41;">1</div>
<div class="t" style="left:17.35px;top:387.64px;font-size:18.5px;color:#2e2e2e;">3</div>
<div class="t" style="left:17.35px;top:425.14px;font-size:18.5px;color:#2e2e2e;">4</div>
<div class="t" style="left:17.35px;top:463.14px;font-size:18.5px;color:#2e2e2e;">5</div>
<div class="t" style="left:17.35px;top:500.64px;font-size:18.5px;color:#2e2e2e;">6</div>
<div class="t" style="left:17.35px;top:538.14px;font-size:18.5px;color:#2e2e2e;">7</div>
<div class="t" style="left:17.35px;top:576.14px;font-size:18.5px;color:#2e2e2e;">8</div>
<div class="t" style="left:17.35px;top:613.64px;font-size:18.5px;color:#2e2e2e;">9</div>
<div class="t" style="left:12.21px;top:650.64px;font-size:18.5px;color:#2e2e2e;">10</div>
<div class="t" style="left:12.89px;top:687.64px;font-size:18.5px;color:#2e2e2e;">11</div>
<div class="t" style="left:12.21px;top:724.64px;font-size:18.5px;color:#2e2e2e;">12</div>
<div class="t" style="left:12.21px;top:768.84px;font-size:18.5px;color:#2e2e2e;">14</div>
<div class="t" style="left:12.21px;top:802.14px;font-size:18.5px;color:#2e2e2e;">15</div>
<div class="t" style="left:12.21px;top:839.24px;font-size:18.5px;color:#2e2e2e;">16</div>
<div class="t" style="left:12.21px;top:875.34px;font-size:18.5px;color:#2e2e2e;">15</div>
<div class="t" style="left:12.21px;top:912.34px;font-size:18.5px;color:#2e2e2e;">16</div>
<div class="t" style="left:12.21px;top:949.84px;font-size:18.5px;color:#2e2e2e;">17</div>
<div style="position:absolute;left:44px;top:292px;width:765px;height:45px;background:linear-gradient(#dde8f3,#d9e5f2)"></div>
<div class="t" style="left:306.75px;top:305.18px;font-size:24px;font-weight:700;color:#111;transform:scaleX(1.0090);">Produktübersicht</div>
<div style="position:absolute;left:44px;top:337px;width:765px;height:40px;background:linear-gradient(#b4c8e7,#b9cce9)"></div>
<div class="t" style="left:70.00px;top:351.91px;font-size:17px;font-weight:700;color:#111;transform:scaleX(0.9855);">Produkt</div>
<div class="t" style="left:180.00px;top:351.91px;font-size:17px;font-weight:700;color:#111;transform:scaleX(0.9691);">Kategorie</div>
<div class="t" style="left:299.00px;top:351.91px;font-size:17px;font-weight:700;color:#111;transform:scaleX(0.9897);">Verkäufer</div>
<div class="t" style="left:429.30px;top:351.91px;font-size:17px;font-weight:700;color:#111;transform:scaleX(0.9373);">Region</div>
<div class="t" style="left:558.20px;top:351.91px;font-size:17px;font-weight:700;color:#111;transform:scaleX(0.9889);">Umsatz</div>
<div class="t" style="left:708.70px;top:351.91px;font-size:17px;font-weight:700;color:#111;transform:scaleX(1.0112);">Datum</div>
<div style="position:absolute;left:136.8px;top:354.5px;width:20px;height:19.5px;background:linear-gradient(#fff,#eef1f6);box-shadow:0 0 0 .5px #c5cede"></div>
<svg style="position:absolute;left:141.3px;top:361.5px;" width="11" height="7" viewBox="0 0 11 7"><path d="M0.8 0.8 H10.2 L5.5 6 Z" fill="#444"/></svg>
<div style="position:absolute;left:257px;top:354.5px;width:20px;height:19.5px;background:linear-gradient(#fff,#eef1f6);box-shadow:0 0 0 .5px #c5cede"></div>
<svg style="position:absolute;left:261.5px;top:361.5px;" width="11" height="7" viewBox="0 0 11 7"><path d="M0.8 0.8 H10.2 L5.5 6 Z" fill="#444"/></svg>
<div style="position:absolute;left:376.5px;top:354.5px;width:20px;height:19.5px;background:linear-gradient(#fff,#eef1f6);box-shadow:0 0 0 .5px #c5cede"></div>
<svg style="position:absolute;left:381.0px;top:361.5px;" width="11" height="7" viewBox="0 0 11 7"><path d="M0.8 0.8 H10.2 L5.5 6 Z" fill="#444"/></svg>
<div style="position:absolute;left:494.5px;top:354.5px;width:20px;height:19.5px;background:linear-gradient(#fff,#eef1f6);box-shadow:0 0 0 .5px #c5cede"></div>
<svg style="position:absolute;left:499.0px;top:361.5px;" width="11" height="7" viewBox="0 0 11 7"><path d="M0.8 0.8 H10.2 L5.5 6 Z" fill="#444"/></svg>
<div style="position:absolute;left:639.8px;top:354.5px;width:20px;height:19.5px;background:linear-gradient(#fff,#eef1f6);box-shadow:0 0 0 .5px #c5cede"></div>
<svg style="position:absolute;left:644.3px;top:361.5px;" width="11" height="7" viewBox="0 0 11 7"><path d="M0.8 0.8 H10.2 L5.5 6 Z" fill="#444"/></svg>
<div style="position:absolute;left:787.8px;top:354.5px;width:20px;height:19.5px;background:linear-gradient(#fff,#eef1f6);box-shadow:0 0 0 .5px #c5cede"></div>
<svg style="position:absolute;left:792.3px;top:361.5px;" width="11" height="7" viewBox="0 0 11 7"><path d="M0.8 0.8 H10.2 L5.5 6 Z" fill="#444"/></svg>
<div class="t" style="left:55.00px;top:388.49px;font-size:17.5px;color:#151515;transform:scaleX(1.0278);">Apfel</div>
<div class="t" style="left:436.55px;top:388.49px;font-size:17.5px;color:#151515;transform:scaleX(1.0412);">Nord</div>
<div class="t" style="left:553.65px;top:388.49px;font-size:17.5px;color:#151515;transform:scaleX(1.0231);">144,00 €</div>
<div class="t" style="left:689.30px;top:388.49px;font-size:17.5px;color:#151515;transform:scaleX(1.0366);">02.05.2024</div>
<div class="t" style="left:55.00px;top:425.99px;font-size:17.5px;color:#151515;transform:scaleX(0.9943);">Banane</div>
<div class="t" style="left:441.95px;top:425.99px;font-size:17.5px;color:#151515;transform:scaleX(0.9216);">Süd</div>
<div class="t" style="left:553.65px;top:425.99px;font-size:17.5px;color:#151515;transform:scaleX(1.0231);">120,00 €</div>
<div class="t" style="left:689.30px;top:425.99px;font-size:17.5px;color:#151515;transform:scaleX(1.0366);">03.05.2024</div>
<div class="t" style="left:55.00px;top:463.99px;font-size:17.5px;color:#151515;transform:scaleX(1.0454);">Karotte</div>
<div class="t" style="left:436.55px;top:463.99px;font-size:17.5px;color:#151515;transform:scaleX(1.0412);">Nord</div>
<div class="t" style="left:558.75px;top:463.99px;font-size:17.5px;color:#151515;transform:scaleX(1.0190);">98,00 €</div>
<div class="t" style="left:689.30px;top:463.99px;font-size:17.5px;color:#151515;transform:scaleX(1.0366);">03.05.2024</div>
<div class="t" style="left:55.00px;top:501.49px;font-size:17.5px;color:#151515;transform:scaleX(1.0455);">Tomate</div>
<div class="t" style="left:436.30px;top:501.49px;font-size:17.5px;color:#151515;transform:scaleX(1.0115);">West</div>
<div class="t" style="left:553.65px;top:501.49px;font-size:17.5px;color:#151515;transform:scaleX(1.0231);">198,00 €</div>
<div class="t" style="left:689.30px;top:501.49px;font-size:17.5px;color:#151515;transform:scaleX(1.0366);">04.05.2024</div>
<div class="t" style="left:55.00px;top:538.99px;font-size:17.5px;color:#151515;transform:scaleX(1.0072);">Gurke</div>
<div class="t" style="left:442.80px;top:538.99px;font-size:17.5px;color:#151515;transform:scaleX(0.9914);">Ost</div>
<div class="t" style="left:558.75px;top:538.99px;font-size:17.5px;color:#151515;transform:scaleX(1.0190);">90,00 €</div>
<div class="t" style="left:689.30px;top:538.99px;font-size:17.5px;color:#151515;transform:scaleX(1.0366);">05.05.2024</div>
<div class="t" style="left:55.00px;top:576.99px;font-size:17.5px;color:#151515;transform:scaleX(1.0279);">Birne</div>
<div class="t" style="left:441.95px;top:576.99px;font-size:17.5px;color:#151515;transform:scaleX(0.9216);">Süd</div>
<div class="t" style="left:553.65px;top:576.99px;font-size:17.5px;color:#151515;transform:scaleX(1.0430);">110,00 €</div>
<div class="t" style="left:689.30px;top:576.99px;font-size:17.5px;color:#151515;transform:scaleX(1.0366);">05.05.2024</div>
<div class="t" style="left:55.00px;top:614.49px;font-size:17.5px;color:#151515;">Traube</div>
<div class="t" style="left:435.80px;top:614.49px;font-size:17.5px;color:#151515;transform:scaleX(1.0116);">Weta</div>
<div class="t" style="left:553.65px;top:614.49px;font-size:17.5px;color:#151515;transform:scaleX(1.0231);">130,00 €</div>
<div class="t" style="left:689.30px;top:614.49px;font-size:17.5px;color:#151515;transform:scaleX(1.0366);">06.05.2024</div>
<div class="t" style="left:55.00px;top:651.49px;font-size:17.5px;color:#151515;">Paprika</div>
<div class="t" style="left:436.55px;top:651.49px;font-size:17.5px;color:#151515;transform:scaleX(1.0412);">Nord</div>
<div class="t" style="left:553.65px;top:651.49px;font-size:17.5px;color:#151515;transform:scaleX(1.0231);">160,00 €</div>
<div class="t" style="left:689.30px;top:651.49px;font-size:17.5px;color:#151515;transform:scaleX(1.0366);">07.05.2024</div>
<div class="t" style="left:55.00px;top:688.49px;font-size:17.5px;color:#151515;transform:scaleX(1.0109);">Pfirsich</div>
<div class="t" style="left:442.80px;top:688.49px;font-size:17.5px;color:#151515;transform:scaleX(0.9914);">Ost</div>
<div class="t" style="left:553.65px;top:688.49px;font-size:17.5px;color:#151515;transform:scaleX(1.0231);">125,00 €</div>
<div class="t" style="left:689.30px;top:688.49px;font-size:17.5px;color:#151515;transform:scaleX(1.0366);">07.05.2024</div>
<div class="t" style="left:55.00px;top:725.49px;font-size:17.5px;color:#151515;transform:scaleX(0.9777);">Salat</div>
<div class="t" style="left:441.95px;top:725.49px;font-size:17.5px;color:#151515;transform:scaleX(0.9216);">Süd</div>
<div class="t" style="left:558.75px;top:725.49px;font-size:17.5px;color:#151515;transform:scaleX(1.0190);">80,00 €</div>
<div class="t" style="left:689.30px;top:725.49px;font-size:17.5px;color:#151515;transform:scaleX(1.0366);">08.05.2024</div>
<div style="position:absolute;left:44px;top:292px;width:765px;height:1px;background:#26303d"></div>
<div style="position:absolute;left:44px;top:337px;width:765px;height:1px;background:#26303d"></div>
<div style="position:absolute;left:44px;top:377px;width:765px;height:1px;background:#26303d"></div>
<div style="position:absolute;left:44px;top:414px;width:765px;height:1px;background:#26303d"></div>
<div style="position:absolute;left:44px;top:452px;width:765px;height:1px;background:#26303d"></div>
<div style="position:absolute;left:44px;top:490px;width:765px;height:1px;background:#26303d"></div>
<div style="position:absolute;left:44px;top:527px;width:765px;height:1px;background:#26303d"></div>
<div style="position:absolute;left:44px;top:565px;width:765px;height:1px;background:#26303d"></div>
<div style="position:absolute;left:44px;top:603px;width:765px;height:1px;background:#26303d"></div>
<div style="position:absolute;left:44px;top:640px;width:765px;height:1px;background:#26303d"></div>
<div style="position:absolute;left:44px;top:677px;width:765px;height:1px;background:#26303d"></div>
<div style="position:absolute;left:44px;top:714px;width:765px;height:1px;background:#26303d"></div>
<div style="position:absolute;left:44px;top:751px;width:765px;height:1px;background:#26303d"></div>
<div style="position:absolute;left:44px;top:292px;width:1px;height:460px;background:#26303d"></div>
<div style="position:absolute;left:157px;top:337px;width:1px;height:415px;background:#26303d"></div>
<div style="position:absolute;left:278px;top:337px;width:1px;height:415px;background:#26303d"></div>
<div style="position:absolute;left:397px;top:337px;width:1px;height:415px;background:#26303d"></div>
<div style="position:absolute;left:515px;top:337px;width:1px;height:415px;background:#26303d"></div>
<div style="position:absolute;left:660px;top:337px;width:1px;height:415px;background:#26303d"></div>
<div style="position:absolute;left:808px;top:292px;width:1px;height:460px;background:#26303d"></div>
<div style="position:absolute;left:11.7px;top:348.4px;width:26.6px;height:26.6px;border-radius:50%;background:radial-gradient(circle at 45% 35%,#e01e22 0%,#c8101a 60%,#b00c14 100%);box-shadow:0 1px 2px rgba(0,0,0,.25)"></div>
<div class="t" style="left:19.71px;top:352.96px;font-size:19px;font-weight:700;color:#fff;">1</div>
<div style="position:absolute;left:0px;top:977px;width:1536px;height:47px;background:#f0f0f0"></div>
<div style="position:absolute;left:0px;top:976.5px;width:1536px;height:1px;background:#d0d0d0"></div>
<div style="position:absolute;left:0px;top:1000.5px;width:1536px;height:23.5px;background:#f1f1f1"></div>
<svg style="position:absolute;left:28px;top:983px;" width="10" height="13" viewBox="0 0 10 13"><path d="M7 1.5 L2.5 6.5 L7 11.5" fill="none" stroke="#b5b5b5" stroke-width="1.3"/></svg>
<svg style="position:absolute;left:67px;top:983px;" width="10" height="13" viewBox="0 0 10 13"><path d="M3 1.5 L7.5 6.5 L3 11.5" fill="none" stroke="#b5b5b5" stroke-width="1.3"/></svg>
<div style="position:absolute;left:114px;top:977px;width:205.5px;height:22.5px;background:#fff"></div>
<div style="position:absolute;left:0px;top:1000.5px;width:1536px;height:1px;background:#e3e3e3"></div>
<svg style="position:absolute;left:114px;top:997px;" width="206" height="4" viewBox="0 0 206 4"><rect x="0" y="1.6" width="205.5" height="1.6" fill="#1a7a43"/></svg>
<div class="t" style="left:137.50px;top:982.25px;font-size:14px;font-weight:700;color:#1a6e3d;transform:scaleX(0.9918);">Filter einsetzen Beispiel</div>
<svg style="position:absolute;left:346.5px;top:979.5px;" width="21" height="21" viewBox="0 0 21 21"><circle cx="10.5" cy="10.5" r="8.6" fill="none" stroke="#777" stroke-width="1.1"/><path d="M6 10.5 H15 M10.5 6 V15" stroke="#666" stroke-width="1.2"/></svg>
<div class="t" style="left:10.50px;top:1006.92px;font-size:12.5px;color:#333;transform:scaleX(1.0197);">Bereit</div>
<div style="position:absolute;left:1101px;top:1001px;width:54px;height:23px;background:#d2d2d2"></div>
<svg style="position:absolute;left:1119px;top:1004.5px;" width="18" height="16" viewBox="0 0 18 16"><rect x=".7" y=".7" width="16.6" height="14.6" fill="none" stroke="#333" stroke-width="1.3"/><path d="M6.3 .7 V15.3 M11.8 .7 V15.3 M.7 5.5 H17.3 M.7 10.4 H17.3" stroke="#333" stroke-width="1.2"/></svg>
<svg style="position:absolute;left:1174.5px;top:1004.5px;" width="18" height="16" viewBox="0 0 18 16"><rect x=".7" y=".7" width="16.6" height="14.6" fill="none" stroke="#333" stroke-width="1.3"/><path d="M.7 4 H17.3" stroke="#333" stroke-width="1.2"/><path d="M4 7 H14 M4 10 H14 M4 13 H14" stroke="#333" stroke-width="1.4" stroke-dasharray="2 1.3"/></svg>
<svg style="position:absolute;left:1228.5px;top:1004.5px;" width="18" height="16" viewBox="0 0 18 16"><rect x=".7" y=".7" width="16.6" height="14.6" fill="none" stroke="#333" stroke-width="1.3"/><path d="M6.5 .7 V8 H12 V.7 M12 8 H17.3" fill="none" stroke="#333" stroke-width="1.2"/></svg>
<div style="position:absolute;left:1272.5px;top:1011.7px;width:8.5px;height:1.2px;background:#555"></div>
<div style="position:absolute;left:1292.4px;top:1011.8px;width:122px;height:1px;background:#555"></div>
<div style="position:absolute;left:1353px;top:1005.4px;width:6.2px;height:13.4px;background:#444;border-radius:1px"></div>
<svg style="position:absolute;left:1425.5px;top:1006.8px;" width="11" height="11" viewBox="0 0 11 11"><path d="M0.5 5.5 H10.5 M5.5 .5 V10.5" stroke="#555" stroke-width="1.2"/></svg>
<div class="t" style="left:1459.90px;top:1006.90px;font-size:13px;color:#333;transform:scaleX(1.0165);">130%</div>
<div style="position:absolute;left:86px;top:857.5px;width:464.6px;height:109.2px;background:#fff;border:1px solid #555;box-shadow:0 1px 3px rgba(0,0,0,.18)"></div>
<svg style="position:absolute;left:93px;top:859px;" width="28" height="29" viewBox="0 0 28 29"><path d="M14 5.5 C8.5 5.5 6.5 10 7.6 13.4 C8.3 15.6 10.3 16.8 10.6 19.2 H17.4 C17.7 16.8 19.7 15.6 20.4 13.4 C21.5 10 19.5 5.5 14 5.5 Z" fill="#ffd52e" stroke="#222" stroke-width="1.3"/>
<path d="M10.8 20.8 H17.2 M11 22.8 H17 M11.8 24.8 H16.2" stroke="#333" stroke-width="1.4"/><path d="M12.2 18.8 V13.5 L14 15 L15.8 13.5 V18.8" fill="none" stroke="#8a6a00" stroke-width=".9"/>
<path d="M14 .8 V3.2 M5.2 3.6 L6.8 5.4 M22.8 3.6 L21.2 5.4 M1.8 11.2 H4.3 M23.7 11.2 H26.2" stroke="#222" stroke-width="1.2" stroke-linecap="round"/></svg>
<div class="t" style="left:132.80px;top:867.53px;font-size:16.5px;font-weight:700;color:#111;transform:scaleX(0.9493);">Tipp:</div>
<div style="position:absolute;left:98.4px;top:896.6px;width:5px;height:5px;border-radius:50%;background:#111"></div>
<div class="t" style="left:117.20px;top:890.93px;font-size:16.5px;color:#1a1a1a;transform:scaleX(0.9800);">Mehrere Einträge können ausgewählt werden.</div>
<div style="position:absolute;left:98.4px;top:919.6px;width:5px;height:5px;border-radius:50%;background:#111"></div>
<div class="t" style="left:117.20px;top:913.93px;font-size:16.5px;color:#1a1a1a;transform:scaleX(0.9880);">Mit „Filter löschen“ werden wieder alle Daten angezeigt.</div>
<div style="position:absolute;left:98.4px;top:943.1px;width:5px;height:5px;border-radius:50%;background:#111"></div>
<div class="t" style="left:117.20px;top:937.43px;font-size:16.5px;color:#1a1a1a;transform:scaleX(0.9891);">Filterpfeil erneut öffnen, um andere Kriterien zu wählen.</div>
<div style="position:absolute;left:933.2px;top:370.5px;width:467px;height:565px;background:#fff;border:1.6px solid #2b2b2b;box-shadow:0 1px 4px rgba(0,0,0,.22)"></div>
<div class="t" style="left:962.30px;top:383.69px;font-size:19.5px;font-weight:700;color:#111;transform:scaleX(0.9929);">Filter einsetzen – Schritt für Schritt</div>
<div style="position:absolute;left:938.3000000000001px;top:426.5px;width:26.6px;height:26.6px;border-radius:50%;background:radial-gradient(circle at 45% 35%,#e01e22 0%,#c8101a 60%,#b00c14 100%);box-shadow:0 1px 2px rgba(0,0,0,.25)"></div>
<div class="t" style="left:946.31px;top:431.06px;font-size:19px;font-weight:700;color:#fff;">1</div>
<div class="t" style="left:969.50px;top:431.99px;font-size:17.5px;font-weight:700;color:#111;transform:scaleX(0.9639);">Filter aktivieren</div>
<div class="t" style="left:970.50px;top:458.56px;font-size:18px;color:#1a1a1a;">1.</div>
<div class="t" style="left:993.20px;top:458.56px;font-size:18px;color:#1a1a1a;transform:scaleX(0.9246);">Bereich mit Überschriften markieren (z. B. A2:F2).</div>
<div class="t" style="left:970.50px;top:487.56px;font-size:18px;color:#1a1a1a;">2.</div>
<div class="t" style="left:993.20px;top:487.56px;font-size:18px;color:#1a1a1a;"><b style="font-weight:400;-webkit-text-stroke:.8px #1a1a1a">Start</b> <span style="font-family:DejaVu Sans,sans-serif;font-size:18px;-webkit-text-stroke:0">→</span> Sortieren und Filtern <span style="font-family:DejaVu Sans,sans-serif;font-size:14.5px;position:relative;top:-1.5px">▼</span> klicken.</div>
<div class="t" style="left:970.50px;top:516.16px;font-size:18px;color:#1a1a1a;">3.</div>
<div class="t" style="left:993.20px;top:516.16px;font-size:18px;color:#1a1a1a;transform:scaleX(0.9359);"><b style="font-weight:400;-webkit-text-stroke:.8px #1a1a1a">Filter</b> klicken.</div>
<div class="t" style="left:993.20px;top:543.86px;font-size:18px;color:#1a1a1a;transform:scaleX(0.9527);"><span style="font-family:DejaVu Sans,sans-serif;font-size:18px;-webkit-text-stroke:0">→</span> In jeder Überschrift erscheint ein Filterpfeil.</div>
<div style="position:absolute;left:938.3000000000001px;top:588.2px;width:26.6px;height:26.6px;border-radius:50%;background:radial-gradient(circle at 45% 35%,#e01e22 0%,#c8101a 60%,#b00c14 100%);box-shadow:0 1px 2px rgba(0,0,0,.25)"></div>
<div class="t" style="left:946.31px;top:592.76px;font-size:19px;font-weight:700;color:#fff;">2</div>
<div class="t" style="left:969.50px;top:593.09px;font-size:17.5px;font-weight:700;color:#111;transform:scaleX(0.9594);">Filter öffnen</div>
<div class="t" style="left:970.50px;top:619.66px;font-size:18px;color:#1a1a1a;">1.</div>
<div class="t" style="left:993.20px;top:619.66px;font-size:18px;color:#1a1a1a;transform:scaleX(0.9534);">Auf den Filterpfeil in der gewünschten Spalte klicken</div>
<div class="t" style="left:993.20px;top:644.56px;font-size:18px;color:#1a1a1a;transform:scaleX(0.8996);">(z. B. Kategorie).</div>
<div class="t" style="left:993.20px;top:670.46px;font-size:18px;color:#1a1a1a;transform:scaleX(0.9507);"><span style="font-family:DejaVu Sans,sans-serif;font-size:18px;-webkit-text-stroke:0">→</span> Es öffnet sich das Filtermenü.</div>
<div style="position:absolute;left:938.3000000000001px;top:710.9000000000001px;width:26.6px;height:26.6px;border-radius:50%;background:radial-gradient(circle at 45% 35%,#e01e22 0%,#c8101a 60%,#b00c14 100%);box-shadow:0 1px 2px rgba(0,0,0,.25)"></div>
<div class="t" style="left:946.31px;top:715.46px;font-size:19px;font-weight:700;color:#fff;">3</div>
<div class="t" style="left:969.50px;top:717.09px;font-size:17.5px;font-weight:700;color:#111;transform:scaleX(0.9882);">Daten filtern</div>
<div class="t" style="left:970.50px;top:744.26px;font-size:18px;color:#1a1a1a;">1.</div>
<div class="t" style="left:993.20px;top:744.26px;font-size:18px;color:#1a1a1a;transform:scaleX(0.9315);">Gewünschte Einträge auswählen (z. B. nur „Obst“).</div>
<div class="t" style="left:970.50px;top:771.96px;font-size:18px;color:#1a1a1a;">2.</div>
<div class="t" style="left:993.20px;top:771.96px;font-size:18px;color:#1a1a1a;transform:scaleX(0.9127);"><b style="font-weight:400;-webkit-text-stroke:.8px #1a1a1a">OK</b> klicken.</div>
<div class="t" style="left:993.20px;top:798.06px;font-size:18px;color:#1a1a1a;transform:scaleX(0.9519);"><span style="font-family:DejaVu Sans,sans-serif;font-size:18px;-webkit-text-stroke:0">→</span> Die Tabelle zeigt nur noch die gefilterten Daten an.</div>
<div style="position:absolute;left:941.2px;top:839.5px;width:398.4px;height:81.3px;background:#fdf6df;border:1px solid #707070"></div>
<div class="t" style="left:951.60px;top:847.96px;font-size:16px;font-weight:700;color:#111;transform:scaleX(0.8957);">Ergebnis:</div>
<div class="t" style="left:951.60px;top:870.66px;font-size:16px;color:#1a1a1a;transform:scaleX(0.9651);">Die Tabelle zeigt nur noch die Zeilen an,</div>
<div class="t" style="left:951.60px;top:893.46px;font-size:16px;color:#1a1a1a;transform:scaleX(0.9944);">die den ausgewählten Filterkriterien entsprechen.</div>
<div style="position:absolute;left:158px;top:377px;width:237px;height:461px;background:#fff;border:1px solid #6e6e6e;box-shadow:1px 2px 5px rgba(0,0,0,.3)"></div>
<div class="t" style="left:179.80px;top:392.07px;font-size:13.5px;color:#1f1f1f;transform:scaleX(0.9642);"><span style="text-decoration:underline;text-decoration-thickness:1px;text-underline-offset:1.5px">V</span>on A bis Z sortieren</div>
<div class="t" style="left:179.80px;top:425.47px;font-size:13.5px;color:#1f1f1f;transform:scaleX(0.9642);"><span style="text-decoration:underline;text-decoration-thickness:1px;text-underline-offset:1.5px">V</span>on Z bis A sortieren</div>
<div class="t" style="left:179.80px;top:457.97px;font-size:13.5px;color:#1f1f1f;transform:scaleX(0.9147);">Nach Farbe sortieren</div>
<svg style="position:absolute;left:379px;top:457.5px;" width="8" height="12" viewBox="0 0 8 12"><path d="M2.2 2.4 L5.8 6 L2.2 9.6" fill="none" stroke="#444" stroke-width="1.3" stroke-linecap="round" stroke-linejoin="round"/></svg>
<div style="position:absolute;left:160px;top:481.3px;width:234px;height:1px;background:#e2e2e2"></div>
<div class="t" style="left:179.80px;top:492.57px;font-size:13.5px;color:#a9a9a9;transform:scaleX(0.9046);">Tabellenansicht</div>
<svg style="position:absolute;left:379px;top:492px;" width="8" height="12" viewBox="0 0 8 12"><path d="M2.2 2.4 L5.8 6 L2.2 9.6" fill="none" stroke="#bbb" stroke-width="1.3" stroke-linecap="round" stroke-linejoin="round"/></svg>
<div style="position:absolute;left:160px;top:514.8px;width:234px;height:1px;background:#e2e2e2"></div>
<div class="t" style="left:179.80px;top:527.07px;font-size:13.5px;color:#a9a9a9;transform:scaleX(0.9506);"><span style="text-decoration:underline;text-decoration-thickness:1px;text-underline-offset:1.5px">F</span>ilter löschen aus "Kategorie"</div>
<div class="t" style="left:179.80px;top:559.27px;font-size:13.5px;color:#a9a9a9;transform:scaleX(0.9376);">Nach Farbe filtern</div>
<svg style="position:absolute;left:379px;top:558.8px;" width="8" height="12" viewBox="0 0 8 12"><path d="M2.2 2.4 L5.8 6 L2.2 9.6" fill="none" stroke="#bbb" stroke-width="1.3" stroke-linecap="round" stroke-linejoin="round"/></svg>
<div class="t" style="left:179.80px;top:592.27px;font-size:13.5px;color:#1f1f1f;transform:scaleX(0.9563);">Text<span style="text-decoration:underline;text-decoration-thickness:1px;text-underline-offset:1.5px">f</span>ilter</div>
<svg style="position:absolute;left:379px;top:591.8px;" width="8" height="12" viewBox="0 0 8 12"><path d="M2.2 2.4 L5.8 6 L2.2 9.6" fill="none" stroke="#444" stroke-width="1.3" stroke-linecap="round" stroke-linejoin="round"/></svg>
<div style="position:absolute;left:160px;top:614.6px;width:234px;height:1px;background:#e2e2e2"></div>
<div style="position:absolute;left:174.7px;top:622.7px;width:212.1px;height:25.6px;border:1px solid #bdbdbd;border-radius:3px;background:#fff;box-shadow:0 1px 0 rgba(0,0,0,.05)"></div>
<div class="t" style="left:179.00px;top:630.30px;font-size:13px;color:#666;transform:scaleX(0.9049);">Suchen</div>
<svg style="position:absolute;left:367.5px;top:627px;" width="18" height="18" viewBox="0 0 18 18"><circle cx="10.8" cy="7" r="4.8" fill="none" stroke="#444" stroke-width="1.2"/><path d="M7.4 10.6 L2 16" stroke="#444" stroke-width="1.3" stroke-linecap="round"/></svg>
<div style="position:absolute;left:174.7px;top:655.7px;width:212.1px;height:128.8px;border:1px solid #e0e0e0;background:#fff"></div>
<div style="position:absolute;left:182px;top:666.5px;width:1px;height:45.5px;background:#999"></div>
<div style="position:absolute;left:182px;top:666.5px;width:9.5px;height:1px;background:#999"></div>
<div style="position:absolute;left:182px;top:689px;width:9.5px;height:1px;background:#999"></div>
<div style="position:absolute;left:182px;top:711.5px;width:9.5px;height:1px;background:#999"></div>
<div style="position:absolute;left:191.5px;top:660.5px;width:11px;height:11px;border:1px solid #6a6a6a;background:#fff;border-radius:1.5px"></div>
<svg style="position:absolute;left:191.5px;top:660.5px;" width="13" height="13" viewBox="0 0 13 13"><path d="M3 6.8 L5.6 9.4 L10.2 3.4" fill="none" stroke="#111" stroke-width="1.6"/></svg>
<div class="t" style="left:208.40px;top:661.50px;font-size:13px;color:#1f1f1f;transform:scaleX(0.9463);">(Alles auswählen)</div>
<div style="position:absolute;left:191.5px;top:683px;width:11px;height:11px;border:1px solid #6a6a6a;background:#fff;border-radius:1.5px"></div>
<svg style="position:absolute;left:191.5px;top:683px;" width="13" height="13" viewBox="0 0 13 13"><path d="M3 6.8 L5.6 9.4 L10.2 3.4" fill="none" stroke="#111" stroke-width="1.6"/></svg>
<div class="t" style="left:208.40px;top:684.00px;font-size:13px;color:#1f1f1f;transform:scaleX(0.9279);">Gemüse</div>
<div style="position:absolute;left:191.5px;top:705.5px;width:11px;height:11px;border:1px solid #6a6a6a;background:#fff;border-radius:1.5px"></div>
<svg style="position:absolute;left:191.5px;top:705.5px;" width="13" height="13" viewBox="0 0 13 13"><path d="M3 6.8 L5.6 9.4 L10.2 3.4" fill="none" stroke="#111" stroke-width="1.6"/></svg>
<div class="t" style="left:208.40px;top:706.70px;font-size:13px;color:#1f1f1f;transform:scaleX(0.9757);">Obst</div>
<div style="position:absolute;left:242px;top:801.4px;width:46.8px;height:22.1px;border:2px solid #2b7fd6;background:linear-gradient(#f2f2f2,#e2e2e2);border-radius:2px"></div>
<div class="t" style="left:258.00px;top:808.80px;font-size:13px;color:#111;">OK</div>
<div style="position:absolute;left:303px;top:801.4px;width:82.8px;height:24.1px;border:1px solid #adadad;background:linear-gradient(#eeeeee,#dddddd);border-radius:2px"></div>
<div class="t" style="left:315.65px;top:808.80px;font-size:13px;color:#111;transform:scaleX(0.9461);">Abbrechen</div>
<svg style="position:absolute;left:386px;top:829px;" width="9" height="9" viewBox="0 0 9 9"><path d="M8 2 L2 8 M8 5.5 L5.5 8" stroke="#999" stroke-width="1"/></svg>
<div style="position:absolute;left:1311.4px;top:185.3px;width:221.2px;height:206px;background:#fff;border-radius:6px;box-shadow:0 2px 8px rgba(0,0,0,.28),0 0 0 .6px rgba(0,0,0,.12)"></div>
<svg style="position:absolute;left:1322px;top:193px;" width="20" height="19" viewBox="0 0 20 19"><text x="0.3" y="8.6" font-family="Liberation Sans, sans-serif" font-size="11" fill="#2b88d8">A</text><text x="0.6" y="18" font-family="Liberation Sans, sans-serif" font-size="11" fill="#8e5bd0">Z</text><path d="M14 1.5 V16.5 M10.3 12.8 L14 16.6 L17.7 12.8" fill="none" stroke="#333" stroke-width="1.3" stroke-linecap="round" stroke-linejoin="round"/></svg>
<div class="t" style="left:1351.90px;top:197.70px;font-size:13px;color:#1f1f1f;transform:scaleX(0.9937);"><span style="text-decoration:underline;text-decoration-thickness:1px;text-underline-offset:1.5px">V</span>on A bis Z sortieren</div>
<svg style="position:absolute;left:1322px;top:226.5px;" width="20" height="19" viewBox="0 0 20 19"><text x="0.3" y="8.6" font-family="Liberation Sans, sans-serif" font-size="11" fill="#666">A</text><text x="0.6" y="18" font-family="Liberation Sans, sans-serif" font-size="11" fill="#8e5bd0">Z</text><path d="M14 1.5 V16.5 M10.3 12.8 L14 16.6 L17.7 12.8" fill="none" stroke="#333" stroke-width="1.3" stroke-linecap="round" stroke-linejoin="round"/></svg>
<div class="t" style="left:1351.90px;top:231.40px;font-size:13px;color:#1f1f1f;transform:scaleX(0.9937);"><span style="text-decoration:underline;text-decoration-thickness:1px;text-underline-offset:1.5px">V</span>on Z bis A sortieren</div>
<svg style="position:absolute;left:1322px;top:259.5px;" width="20" height="19" viewBox="0 0 20 19"><rect x="1" y="1" width="17.6" height="16.5" rx="1" fill="#fff" stroke="#444" stroke-width="1.2"/><path d="M1 4.2 H18.6" stroke="#444" stroke-width="1.1"/><path d="M3 8.3 H16.6 M3 13 H16.6 M7 5.5 V15.8 M12.6 5.5 V15.8" stroke="#2b88d8" stroke-width="1.5"/></svg>
<div class="t" style="left:1351.90px;top:265.00px;font-size:13px;color:#1f1f1f;transform:scaleX(0.9458);"><span style="text-decoration:underline;text-decoration-thickness:1px;text-underline-offset:1.5px">B</span>enutzerdefiniertes Sortieren...</div>
<div style="position:absolute;left:1344px;top:287.9px;width:188.6px;height:33.7px;background:#e9e9e9"></div>
<div class="t" style="left:1351.90px;top:299.90px;font-size:13px;color:#1f1f1f;transform:scaleX(0.9721);"><span style="text-decoration:underline;text-decoration-thickness:1px;text-underline-offset:1.5px">F</span>ilter</div>
<div style="position:absolute;left:1314.8px;top:293.0px;width:27.0px;height:27.0px;border-radius:50%;background:radial-gradient(circle at 45% 35%,#e01e22 0%,#c8101a 60%,#b00c14 100%);box-shadow:0 1px 2px rgba(0,0,0,.25)"></div>
<div class="t" style="left:1323.01px;top:297.76px;font-size:19px;font-weight:700;color:#fff;">3</div>
<svg style="position:absolute;left:1322px;top:329.5px;" width="21" height="19" viewBox="0 0 21 19"><path d="M1.5 1.2 H16.5 L10.8 8.2 V15.5 L7.6 17.3 V8.2 Z" fill="none" stroke="#b9b9b9" stroke-width="1.2" stroke-linejoin="round"/><path d="M12.6 11.2 L18.8 17.4 M18.8 11.2 L12.6 17.4" stroke="#b9b9b9" stroke-width="1.2"/></svg>
<div class="t" style="left:1351.90px;top:333.50px;font-size:13px;color:#a9a9a9;transform:scaleX(0.9358);"><span style="text-decoration:underline;text-decoration-thickness:1px;text-underline-offset:1.5px">L</span>öschen</div>
<svg style="position:absolute;left:1322px;top:363.3px;" width="21" height="19" viewBox="0 0 21 19"><path d="M1.5 1.2 H16.5 L10.8 8.2 V15.5 L7.6 17.3 V8.2 Z" fill="none" stroke="#b9b9b9" stroke-width="1.2" stroke-linejoin="round"/><path d="M12.6 11.2 L18.8 17.4 M18.8 11.2 L12.6 17.4" stroke="#b9b9b9" stroke-width="1.2"/></svg>
<div class="t" style="left:1351.90px;top:367.20px;font-size:13px;color:#a9a9a9;transform:scaleX(0.9517);"><span style="text-decoration:underline;text-decoration-thickness:1px;text-underline-offset:1.5px">E</span>rneut anwenden</div>
<div style="position:absolute;left:1395.8000000000002px;top:77.5px;width:27.2px;height:27.2px;border-radius:50%;background:radial-gradient(circle at 45% 35%,#e01e22 0%,#c8101a 60%,#b00c14 100%);box-shadow:0 1px 2px rgba(0,0,0,.25)"></div>
<div class="t" style="left:1403.97px;top:82.11px;font-size:19.5px;font-weight:700;color:#fff;">2</div>
</div></body></html>
